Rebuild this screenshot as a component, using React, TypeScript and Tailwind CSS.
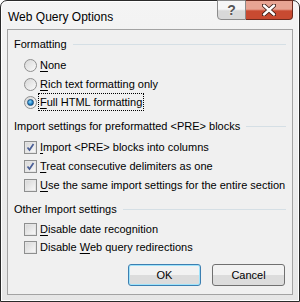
import type { ReactNode } from "react";

const font = { fontFamily: '"Liberation Sans", Arial, sans-serif' };

function Mn({ children }: { children: ReactNode }) {
  return <span className="underline underline-offset-2">{children}</span>;
}

function GroupHeader({ children, mt }: { children: ReactNode; mt: string }) {
  return (
    <div className={`flex h-[18px] items-center pr-[6px] ${mt}`}>
      <span className="whitespace-nowrap">{children}</span>
      <div className="ml-[6px] h-px flex-1 bg-[#d5dfe5]" />
    </div>
  );
}

function Radio({ checked, label, mt, focus }: { checked?: boolean; label: ReactNode; mt: string; focus?: boolean }) {
  return (
    <div className={`flex h-[18px] items-center pl-[10px] ${mt}`}>
      <span className="flex h-[13px] w-[13px] items-center justify-center rounded-full border border-[#8f8f8f] bg-gradient-to-br from-[#d8d8d8] to-[#fafafa]">
        {checked && (
          <span className="h-[7px] w-[7px] rounded-full border border-[#1e4f7c] bg-[radial-gradient(circle_at_40%_35%,#8fdcff,#1a7dc4_60%,#0b4a80)]" />
        )}
      </span>
      <span
        className={`ml-[1px] whitespace-nowrap px-[1px] leading-[16px] ${focus ? "border border-dotted border-black" : "border border-transparent"}`}
      >
        {label}
      </span>
    </div>
  );
}

function Check({ checked, label, mt }: { checked?: boolean; label: ReactNode; mt: string }) {
  return (
    <div className={`flex h-[18px] items-center pl-[10px] ${mt}`}>
      <span className="flex h-[13px] w-[13px] items-center justify-center border border-[#8e8f8f] bg-white">
        <span className="flex h-[11px] w-[11px] items-center justify-center border border-[#e4e4e4] bg-gradient-to-br from-[#d9d9d9] to-[#f7f7f7]">
          {checked && (
            <svg width="9" height="9" viewBox="0 0 9 9">
              <path d="M1.5 4.5 L3.5 7 L7.5 1" fill="none" stroke="#4a5f97" strokeWidth="1.7" />
            </svg>
          )}
        </span>
      </span>
      <span className="ml-[3px] whitespace-nowrap leading-[16px]">{label}</span>
    </div>
  );
}

function Button({ children, def }: { children: ReactNode; def?: boolean }) {
  return (
    <div
      className={`flex h-[22px] w-[73px] items-center justify-center rounded-[3px] border ${
        def ? "border-[#3c7fb1] shadow-[inset_0_0_0_1px_#9fe3fb]" : "border-[#707070]"
      } bg-gradient-to-b from-[#f2f2f2] from-50% to-[#dcdcdc] to-50%`}
    >
      {children}
    </div>
  );
}

export default function App() {
  return (
    <div className="h-[302px] w-[300px] bg-white" style={font}>
      <div className="flex h-full w-full flex-col rounded-t-[7px] border border-[#2a2a2a] bg-gradient-to-b from-[#f4f4f4] to-[#e6e6e6] shadow-[inset_0_0_0_1px_#ffffff]">
        <div className="relative h-[28px] shrink-0">
          <span className="absolute left-[7px] top-[7px] text-[12px] text-black [text-shadow:0_0_6px_#ffffff]">
            Web Query Options
          </span>
          <div className="absolute right-[6px] top-[-1px] flex">
            <div className="flex h-[20px] w-[29px] items-center justify-center rounded-bl-[4px] border border-[#8b8b8b] bg-gradient-to-b from-[#f6f6f6] from-45% to-[#d8d8d8] to-55% text-[14px] font-bold leading-none text-[#555] [text-shadow:0_0_2px_#fff]">
              ?
            </div>
            <div className="flex h-[20px] w-[47px] items-center justify-center rounded-br-[4px] border border-l-0 border-[#6d2a1e] bg-gradient-to-b from-[#e8a493] from-45% to-[#c84a31] to-55%">
              <svg width="14" height="12" viewBox="0 0 14 12">
                <path d="M2 1.5 L12 10.5 M12 1.5 L2 10.5" stroke="#3a1a14" strokeWidth="4.2" strokeLinecap="round" />
                <path d="M2 1.5 L12 10.5 M12 1.5 L2 10.5" stroke="#ffffff" strokeWidth="2.4" strokeLinecap="round" />
              </svg>
            </div>
          </div>
        </div>
        <div className="mx-[6px] mb-[6px] flex flex-1 flex-col border border-[#a3a3a3] bg-[#f0f0f0] pl-[6px] pt-[5px] text-[11px] text-black">
          <GroupHeader mt="mt-0">Formatting</GroupHeader>
          <Radio mt="mt-[3px]" label={<><Mn>N</Mn>one</>} />
          <Radio mt="mt-[1px]" label={<><Mn>R</Mn>ich text formatting only</>} />
          <Radio mt="mt-0" checked focus label={<><Mn>F</Mn>ull HTML formatting</>} />
          <GroupHeader mt="mt-[6px]">Import settings for preformatted &lt;PRE&gt; blocks</GroupHeader>
          <Check mt="mt-[3px]" checked label={<><Mn>I</Mn>mport &lt;PRE&gt; blocks into columns</>} />
          <Check mt="mt-[1px]" checked label={<><Mn>T</Mn>reat consecutive delimiters as one</>} />
          <Check mt="mt-[1px]" label={<><Mn>U</Mn>se the same import settings for the entire section</>} />
          <GroupHeader mt="mt-[6px]">Other Import settings</GroupHeader>
          <Check mt="mt-[2px]" label={<><Mn>D</Mn>isable date recognition</>} />
          <Check mt="mt-0" label={<>Disable <Mn>W</Mn>eb query redirections</>} />
          <div className="mt-[8px] flex justify-end gap-[11px] pr-[7px]">
            <Button def>OK</Button>
            <Button>Cancel</Button>
          </div>
        </div>
      </div>
    </div>
  );
}
